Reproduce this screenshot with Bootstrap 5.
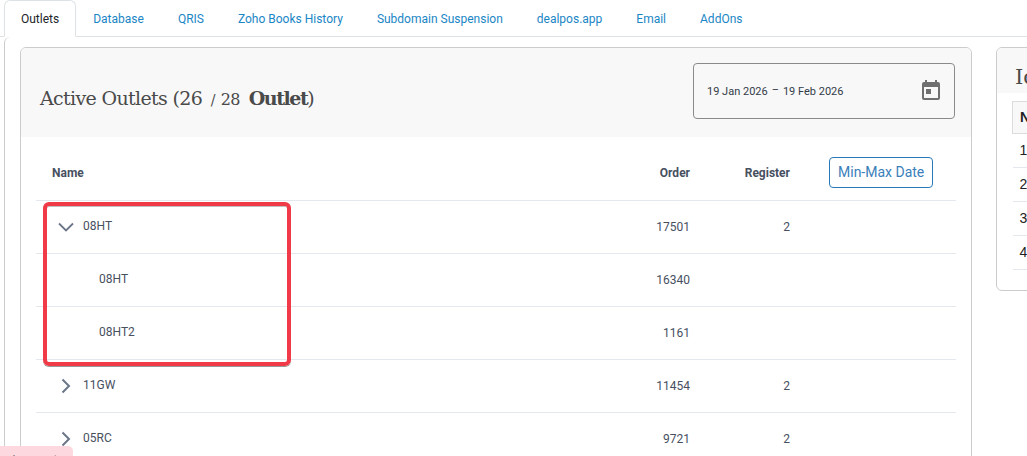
<!DOCTYPE html>
<html lang="en">
<head>
<meta charset="utf-8">
<title>Outlets</title>
<link href="https://cdn.jsdelivr.net/npm/bootstrap@5.3.0/dist/css/bootstrap.min.css" rel="stylesheet">
<style>
html,body{height:456px;overflow:hidden}
body{font-family:Roboto,sans-serif;font-size:12px;color:#47505f;background:#fff;position:relative}
.tabbar{height:37px;padding-left:4px;border-bottom:1px solid #dee2e6;flex-wrap:nowrap}
.tabbar .nav-link{font-size:12px;line-height:18px;padding:9px 16px;color:#1a86c5;border:1px solid transparent;border-radius:6px 6px 0 0;margin-bottom:-1px;height:37px}
.tabbar .nav-link.active{color:#212529;border-color:#dee2e6 #dee2e6 #fff}
.panes{border-left:1px solid #ccc;border-top-left-radius:6px;margin-left:4px;padding:10px 0 0 15px;display:flex;gap:24px;width:1100px;height:420px}
.box{border:1px solid #ccc;border-radius:6px;background:#fff;overflow:hidden}
.mainbox{width:952px;flex:none;height:500px}
.sidebox{width:300px;flex:none;height:244px}
.mainhead{height:89px;background:#f8f8f8;padding:15px 16px 0 19px}
.slab{font-family:"DejaVu Serif",serif;font-weight:400;color:#4a4a4a}
.title{font-size:19px;line-height:70px;margin:0;letter-spacing:-.65px;white-space:nowrap}
.title .frac{font-size:16px;margin:0 9px 0 4px}
.title .slash{font-size:14px;margin-right:6px}
.title b{font-weight:700;letter-spacing:-1.45px}
.datebox{width:262px;height:56px;border:1px solid #8a8a8a;border-radius:4px;padding:0 11px 0 13px;color:#333c48;font-size:11px}
.datebox svg{margin-top:-2px}
.dash{display:inline-block;margin:0 4px;vertical-align:2px}
.outlets{margin:0 15px;width:920px;border-collapse:collapse;font-size:12px;color:#47505f}
.outlets th{font-weight:700;height:63px;padding-top:10px;vertical-align:middle;border-bottom:1px solid #e3e7ee}
.outlets td{height:53px;padding:0;vertical-align:middle;border-bottom:1px solid #e3e7ee}
.outlets th.cname{padding-left:16px}
.cnum{width:60px;text-align:right}
.creg{width:100px;text-align:right}
.outlets td.cnum,.outlets td.creg{padding-right:1px}
.outlets th.cact{width:165px;padding-left:38px}
.rowhead{display:flex;align-items:center;height:100%;padding:0 0 2px 22px;gap:9px}
.rowhead svg{flex:none;margin-top:2px}
.outlets td.sub{padding:0 0 2px 63px}
.minmax{font-size:14px;line-height:21px;color:#3a80ba;border:1px solid #2a78b5;border-radius:4px;padding:4px 8px;background:#fff;white-space:nowrap}
.sidehead{height:45px;background:#f8f8f8;padding:14px 0 0 18px;font-size:21px}
.sidetable{margin:8px 0 0 15px;width:300px;border-collapse:collapse;color:#222;font-family:"Liberation Sans",sans-serif;font-size:14px}
.sidetable th{border:1px solid #dcdcdc;background:#f8f8f8;height:32px;padding-left:7px}
.sidetable td{height:34px;padding-left:7px;border-bottom:1px solid #e3e7ee}
.highlight{position:absolute;left:43px;top:202px;width:248px;height:164px;border:4px solid #f03a47;border-radius:6px;box-shadow:0 1px 0 rgba(0,0,0,.4),inset 0 1px 0 rgba(0,0,0,.25);pointer-events:none}
.toastbit{position:absolute;left:0;top:446px;width:73px;height:30px;background:#fdd8df;border-radius:0 5px 0 0;color:#555;padding:5px 0 0 10px;font-size:12px;white-space:nowrap;overflow:hidden}
</style>
</head>
<body>
<ul class="nav nav-tabs tabbar">
<li class="nav-item"><a class="nav-link active" href="#">Outlets</a></li>
<li class="nav-item"><a class="nav-link" href="#">Database</a></li>
<li class="nav-item"><a class="nav-link" href="#">QRIS</a></li>
<li class="nav-item"><a class="nav-link" href="#">Zoho Books History</a></li>
<li class="nav-item"><a class="nav-link" href="#">Subdomain Suspension</a></li>
<li class="nav-item"><a class="nav-link" href="#">dealpos.app</a></li>
<li class="nav-item"><a class="nav-link" href="#">Email</a></li>
<li class="nav-item"><a class="nav-link" href="#">AddOns</a></li>
</ul>
<div class="panes">
<section class="box mainbox">
<div class="mainhead d-flex justify-content-between">
<h1 class="slab title">Active Outlets (26<span class="frac"> <span class="slash">/</span>28</span><b>Outlet</b>)</h1>
<div class="datebox d-flex align-items-center justify-content-between">
<span>19 Jan 2026<span class="dash">–</span>19 Feb 2026</span>
<svg width="24" height="24" viewBox="0 0 24 24" fill="#6f6f6f"><path d="M19 4h-1V2h-2v2H8V2H6v2H5a2 2 0 0 0-2 2v14a2 2 0 0 0 2 2h14a2 2 0 0 0 2-2V6a2 2 0 0 0-2-2zm0 16H5V9h14v11z"/><path d="M7 11h5v5H7z"/></svg>
</div>
</div>
<table class="outlets">
<thead><tr><th class="cname">Name</th><th class="cnum">Order</th><th class="creg">Register</th><th class="cact"><button class="minmax" type="button">Min-Max Date</button></th></tr></thead>
<tbody>
<tr><td><div class="rowhead"><svg width="16" height="16" viewBox="0 0 16 16" fill="none" stroke="#6b7688" stroke-width="1.8"><path d="M1 4.5l7 7 7-7"/></svg><span>08HT</span></div></td><td class="cnum">17501</td><td class="creg">2</td><td></td></tr>
<tr><td class="sub">08HT</td><td class="cnum">16340</td><td class="creg"></td><td></td></tr>
<tr><td class="sub">08HT2</td><td class="cnum">1161</td><td class="creg"></td><td></td></tr>
<tr><td><div class="rowhead"><svg width="16" height="16" viewBox="0 0 16 16" fill="none" stroke="#6b7688" stroke-width="2"><path d="M4.5 1.5l6.5 6.5-6.5 6.5"/></svg><span>11GW</span></div></td><td class="cnum">11454</td><td class="creg">2</td><td></td></tr>
<tr><td><div class="rowhead"><svg width="16" height="16" viewBox="0 0 16 16" fill="none" stroke="#6b7688" stroke-width="2"><path d="M4.5 1.5l6.5 6.5-6.5 6.5"/></svg><span>05RC</span></div></td><td class="cnum">9721</td><td class="creg">2</td><td></td></tr>
</tbody>
</table>
</section>
<aside class="box sidebox">
<div class="sidehead slab">Id</div>
<table class="sidetable">
<thead><tr><th>No</th></tr></thead>
<tbody><tr><td>1</td></tr><tr><td>2</td></tr><tr><td>3</td></tr><tr><td>4</td></tr></tbody>
</table>
</aside>
</div>
<div class="highlight"></div>
<div class="toastbit">/ ocean t</div>
<script src="https://cdn.jsdelivr.net/npm/bootstrap@5.3.0/dist/js/bootstrap.bundle.min.js"></script>
</body>
</html>
